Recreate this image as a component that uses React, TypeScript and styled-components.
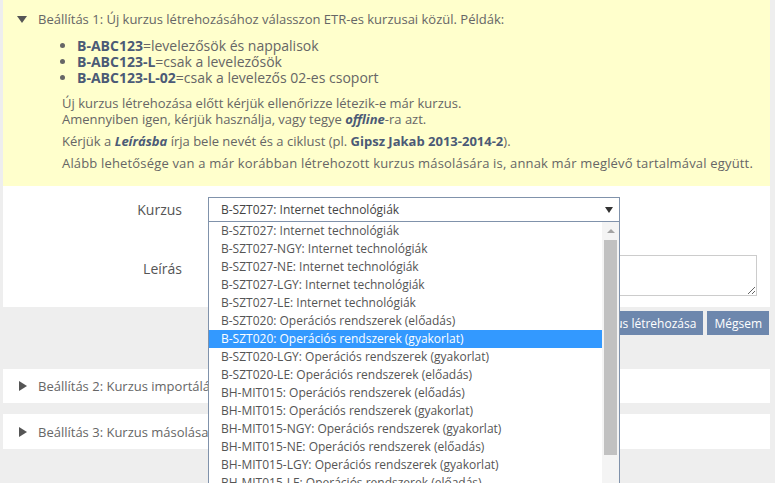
import React from "react";
import styled, { createGlobalStyle } from "styled-components";

const Global = createGlobalStyle`
  html, body { margin: 0; padding: 0; background: #eeeeee; }
  body { font-family: "Open Sans", "Noto Sans", sans-serif; color: #666; }
  * { box-sizing: border-box; }
`;

const Page = styled.div`
  padding: 0 5px 0 3px;
  height: 483px;
  overflow: hidden;
`;

const Panel = styled.section`
  background: #fff;
`;

const Header = styled.div<{ $yellow?: boolean }>`
  display: flex;
  align-items: center;
  gap: 11px;
  padding: ${(p) => (p.$yellow ? "9px 12px 0 14px" : "0 12px 0 14px")};
  height: ${(p) => (p.$yellow ? "auto" : "100%")};
  font-size: 13px;
  line-height: 20px;
  color: #666;
`;

const Caret = styled.span<{ $open?: boolean }>`
  width: 0;
  height: 0;
  ${(p) =>
    p.$open
      ? `border-left: 5px solid transparent; border-right: 5px solid transparent; border-top: 7px solid #555;`
      : `border-top: 5px solid transparent; border-bottom: 5px solid transparent; border-left: 8px solid #555; margin-left: 2px; margin-right: 0;`}
`;

const Yellow = styled.div`
  background: #ffffcc;
  padding-bottom: 9px;
`;

const Body = styled.div`
  padding-left: 59px;
  font-size: 13px;
  color: #666;
`;

const List = styled.ul`
  margin: 9px 0 9px 0;
  padding-left: 15px;
  line-height: 16px;
  font-size: 14px;
  li::marker { color: #666; }
`;

const Strong = styled.b`
  color: #4b5a76;
  font-weight: 700;
`;

const Em = styled.b`
  color: #4b5a76;
  font-style: italic;
  font-weight: 700;
`;

const P = styled.p<{ $wide?: boolean }>`
  margin: 0 0 6px 0;
  line-height: 16px;
  letter-spacing: ${(p) => (p.$wide ? "0.17px" : "0")};
`;

const Form = styled.div`
  padding: 11px 0 11px 0;
  display: grid;
  grid-template-columns: 205px 1fr;
  row-gap: 33px;
  align-items: center;
`;

const Label = styled.label<{ $top?: boolean }>`
  text-align: right;
  padding-right: 26px;
  font-size: 14px;
  color: #555;
  align-self: ${(p) => (p.$top ? "start" : "center")};
  padding-top: ${(p) => (p.$top ? "4px" : "0")};
`;

const SelectWrap = styled.div`
  position: relative;
  width: 412px;
`;

const SelectBox = styled.div`
  height: 25px;
  border: 1px solid #8092ab;
  background: #fff;
  display: flex;
  align-items: center;
  justify-content: space-between;
  padding: 0 6px 0 12px;
  font-size: 12px;
  color: #444;
`;

const SmallArrow = styled.span`
  width: 0;
  height: 0;
  border-left: 4px solid transparent;
  border-right: 4px solid transparent;
  border-top: 6px solid #333;
`;

const Dropdown = styled.div`
  position: absolute;
  top: 25px;
  left: 0;
  width: 412px;
  height: 290px;
  border: 1px solid #8092ab;
  border-top: none;
  background: #fff;
  display: flex;
  z-index: 10;
  overflow: hidden;
`;

const Options = styled.div`
  flex: 1;
`;

const Option = styled.div<{ $sel?: boolean }>`
  height: 18px;
  line-height: 18px;
  padding-left: 12px;
  font-size: 12px;
  white-space: nowrap;
  color: ${(p) => (p.$sel ? "#fff" : "#555")};
  background: ${(p) => (p.$sel ? "#3399ff" : "transparent")};
`;

const Scrollbar = styled.div`
  width: 17px;
  background: #f4f4f4;
  display: flex;
  flex-direction: column;
  align-items: center;
`;

const ScrollUp = styled.div`
  height: 18px;
  display: flex;
  align-items: center;
  justify-content: center;
  &::after {
    content: "";
    border-left: 4px solid transparent;
    border-right: 4px solid transparent;
    border-bottom: 4px solid #a3a3a3;
  }
`;

const Thumb = styled.div`
  width: 13px;
  height: 215px;
  background: #c1c1c1;
`;

const TextArea = styled.textarea`
  display: block;
  width: 549px;
  height: 41px;
  border: 1px solid #ccc;
  resize: both;
  font-family: inherit;
`;

const Actions = styled.div`
  display: flex;
  justify-content: flex-end;
  gap: 4px;
  padding: 4px 1px 0 0;
`;

const Button = styled.button`
  height: 24px;
  padding: 0 7px;
  background: #6d87ad;
  color: #fff;
  border: none;
  font-family: inherit;
  font-size: 12px;
`;

const Collapsed = styled.section<{ $top: number; $h: number }>`
  background: #fff;
  margin-top: ${(p) => p.$top}px;
  height: ${(p) => p.$h}px;
`;

const options = [
  "B-SZT027: Internet technológiák",
  "B-SZT027-NGY: Internet technológiák",
  "B-SZT027-NE: Internet technológiák",
  "B-SZT027-LGY: Internet technológiák",
  "B-SZT027-LE: Internet technológiák",
  "B-SZT020: Operációs rendszerek (előadás)",
  "B-SZT020: Operációs rendszerek (gyakorlat)",
  "B-SZT020-LGY: Operációs rendszerek (gyakorlat)",
  "B-SZT020-LE: Operációs rendszerek (előadás)",
  "BH-MIT015: Operációs rendszerek (előadás)",
  "BH-MIT015: Operációs rendszerek (gyakorlat)",
  "BH-MIT015-NGY: Operációs rendszerek (gyakorlat)",
  "BH-MIT015-NE: Operációs rendszerek (előadás)",
  "BH-MIT015-LGY: Operációs rendszerek (gyakorlat)",
  "BH-MIT015-LE: Operációs rendszerek (előadás)",
  "BH-MIT015-LGY: Operációs rendszerek (gyakorlat)",
];

export default function App() {
  return (
    <>
      <Global />
      <Page>
        <Panel>
          <Yellow>
            <Header $yellow>
              <Caret $open />
              <span>Beállítás 1: Új kurzus létrehozásához válasszon ETR-es kurzusai közül. Példák:</span>
            </Header>
            <Body>
              <List>
                <li><Strong>B-ABC123</Strong>=levelezősök és nappalisok</li>
                <li><Strong>B-ABC123-L</Strong>=csak a levelezősök</li>
                <li><Strong>B-ABC123-L-02</Strong>=csak a levelezős 02-es csoport</li>
              </List>
              <P>
                Új kurzus létrehozása előtt kérjük ellenőrizze létezik-e már kurzus.
                <br />
                Amennyiben igen, kérjük használja, vagy tegye <Em>offline</Em>-ra azt.
              </P>
              <P>
                Kérjük a <Em>Leírásba</Em> írja bele nevét és a ciklust (pl. <Strong>Gipsz Jakab 2013-2014-2</Strong>).
              </P>
              <P $wide>Alább lehetősége van a már korábban létrehozott kurzus másolására is, annak már meglévő tartalmával együtt.</P>
            </Body>
          </Yellow>
          <Form>
            <Label>Kurzus</Label>
            <SelectWrap>
              <SelectBox>
                <span>B-SZT027: Internet technológiák</span>
                <SmallArrow />
              </SelectBox>
              <Dropdown>
                <Options>
                  {options.map((o, i) => (
                    <Option key={i} $sel={i === 6}>{o}</Option>
                  ))}
                </Options>
                <Scrollbar>
                  <ScrollUp />
                  <Thumb />
                </Scrollbar>
              </Dropdown>
            </SelectWrap>
            <Label $top>Leírás</Label>
            <div>
              <TextArea />
            </div>
          </Form>
        </Panel>
        <Actions>
          <Button>Kurzus létrehozása</Button>
          <Button>Mégsem</Button>
        </Actions>
        <Collapsed $top={34} $h={34}>
          <Header>
            <Caret />
            <span>Beállítás 2: Kurzus importálása</span>
          </Header>
        </Collapsed>
        <Collapsed $top={11} $h={35}>
          <Header>
            <Caret />
            <span>Beállítás 3: Kurzus másolása</span>
          </Header>
        </Collapsed>
      </Page>
    </>
  );
}
